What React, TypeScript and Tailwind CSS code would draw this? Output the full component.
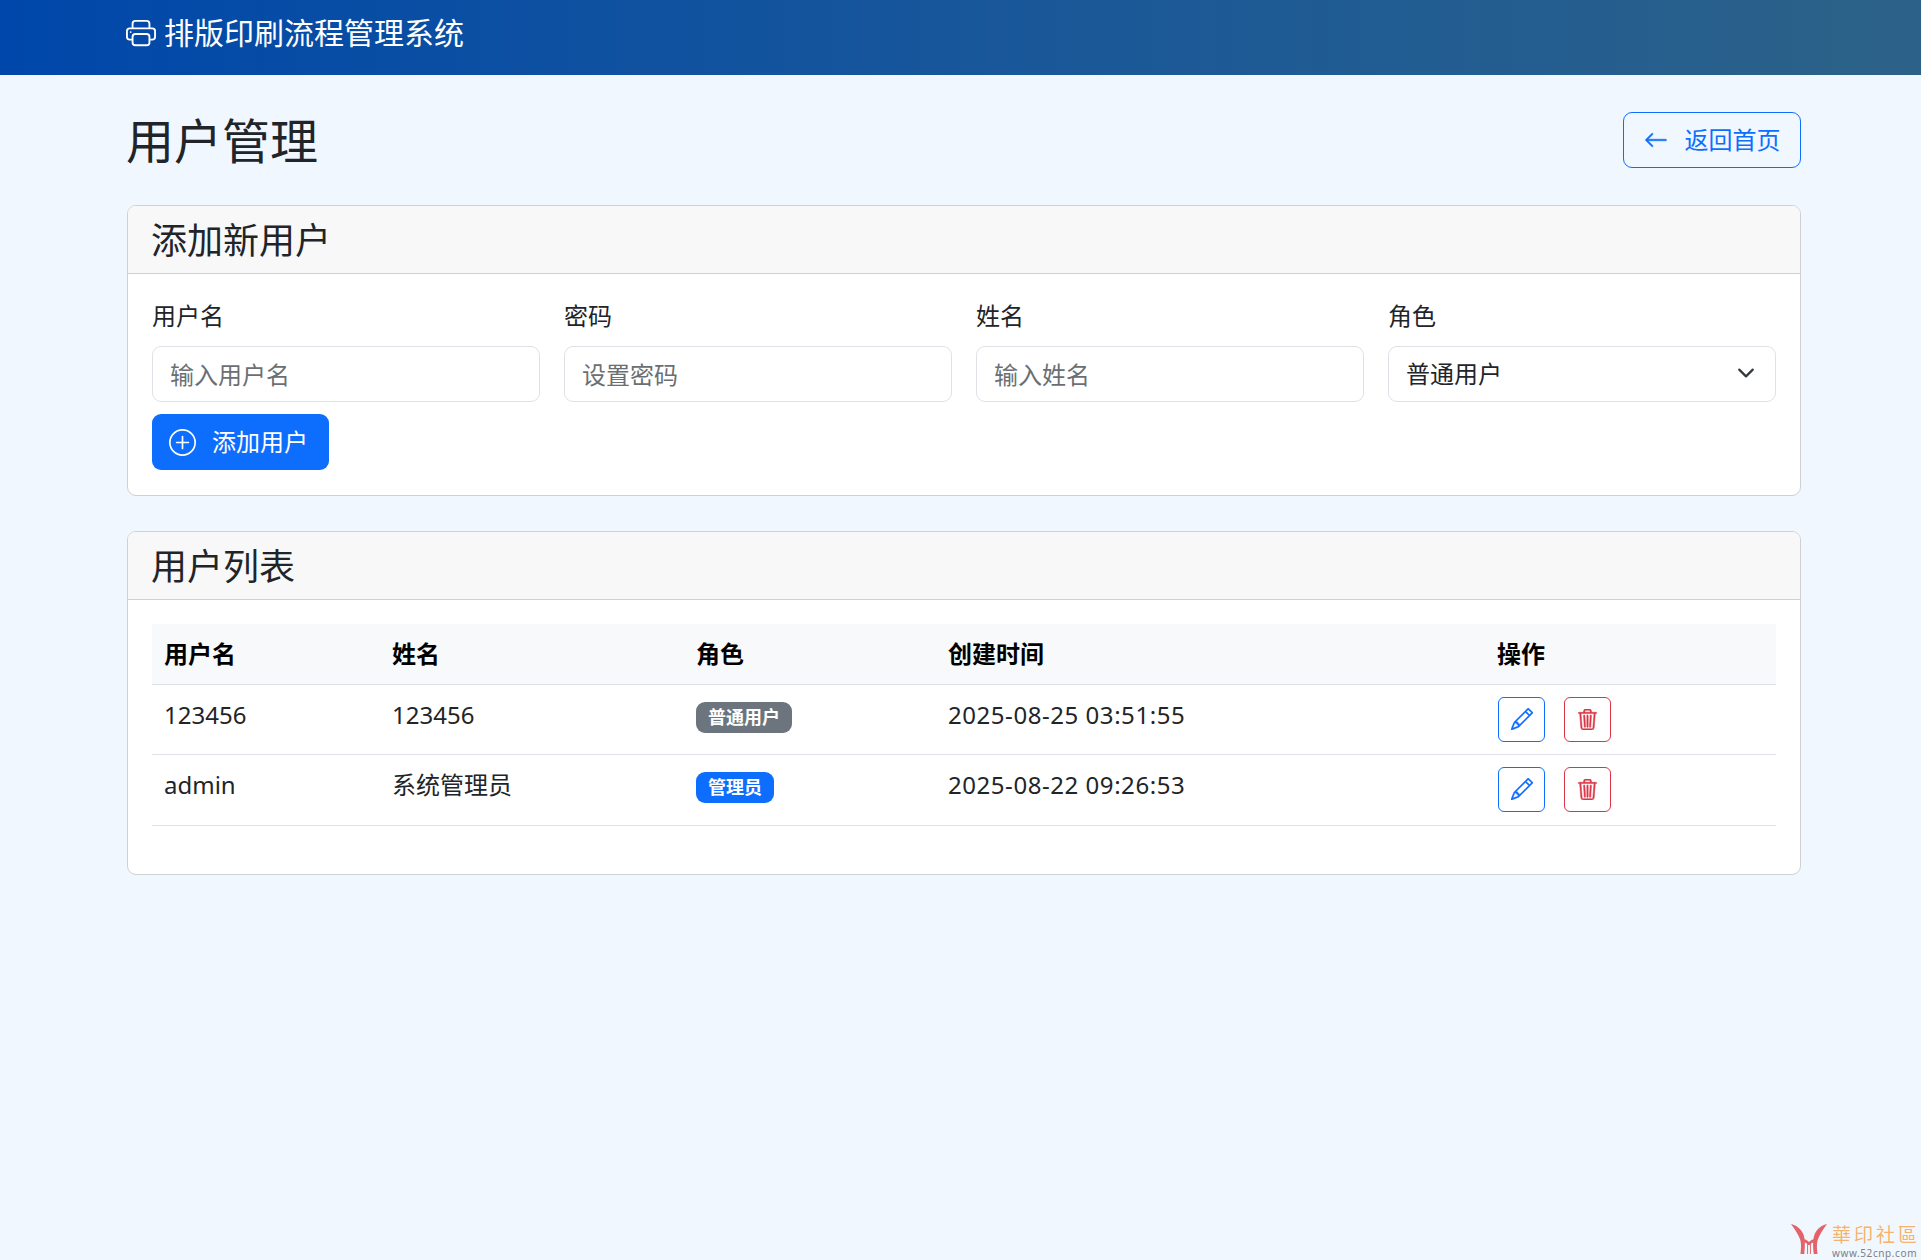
import { BsArrowLeft, BsPencil, BsPlusCircle, BsPrinter, BsTrash3 } from 'react-icons/bs'

const FONT = 'font-["Noto_Sans","Noto_Sans_CJK_SC",sans-serif]'

const FIELDS = [
  { label: '用户名', placeholder: '输入用户名', type: 'text' },
  { label: '密码', placeholder: '设置密码', type: 'password' },
  { label: '姓名', placeholder: '输入姓名', type: 'text' },
]

const USERS = [
  { username: '123456', name: '123456', role: '普通用户', admin: false, created: '2025-08-25 03:51:55' },
  { username: 'admin', name: '系统管理员', role: '管理员', admin: true, created: '2025-08-22 09:26:53' },
]

function Card({ title, children }: { title: string; children: React.ReactNode }) {
  return (
    <section className="rounded-[9px] border border-[#cfd0d2] bg-white overflow-hidden">
      <div className="h-[68px] border-b border-[#cfd0d2] bg-[#f8f8f8] pl-[23px] pr-6 pt-[2px] flex items-center">
        <h2 className="text-[36px] leading-[43px] text-[#212529]">{title}</h2>
      </div>
      {children}
    </section>
  )
}

function Watermark() {
  return (
    <div className="absolute right-[1px] bottom-0 h-[36px] flex items-start">
      <svg width="36" height="34" viewBox="0 0 38 34" preserveAspectRatio="none" className="-mt-[3px] mr-[5px]" aria-hidden="true">
        <path
          d="M0 3c5 1 10 4 13 10 2 5 2 11 1 20h-4c1-8 1-13-2-18C6 11 3 7 0 3Zm38 0c-5 1-10 4-13 10-2 5-2 11-1 20h4c-1-8-1-13 2-18 2-4 5-8 8-12Z"
          fill="#e2646a"
        />
        <path d="M12 18c3 0 5 1 7 3 2-2 4-3 7-3v3c-3 0-4 1-5 2v10h-1V24h-2v9h-1V23c-1-1-2-2-5-2Z" fill="#e2646a" />
      </svg>
      <div className="flex flex-col items-start">
        <span className='font-["Noto_Sans_CJK_TC",sans-serif] text-[19px] leading-[19px] tracking-[3px] text-[#f6b26b] [text-shadow:0_0_2px_#ffffff]'>
          華印社區
        </span>
        <span className="mt-[4px] text-[10px] leading-[13px] tracking-[0.6px] text-[#7b8088]">www.52cnp.com</span>
      </div>
    </div>
  )
}

export default function App() {
  return (
    <div className={`${FONT} relative min-h-[1260px] bg-[#f0f7ff] text-[24px] leading-[36px] text-[#212529]`}>
      <header className="h-[75px] bg-gradient-to-r from-[#0047ab] to-[#2c6288] pl-[126px] pb-[9px] flex items-center text-white">
        <BsPrinter className="text-[30px] mr-[8px]" />
        <span className="text-[30px] leading-[36px]">排版印刷流程管理系统</span>
      </header>

      <main className="ml-[127px] w-[1674px]">
        {/* Title row */}
        <div className="mt-[36px] mb-[37px] flex items-center justify-between h-[57px]">
          <h1 className="text-[48px] leading-[57px] text-[#212529] -ml-[1px] mt-[2px]">用户管理</h1>
          <a className="mt-[1px] h-[56px] w-[178px] rounded-[9px] border border-[#0d6efd] text-[#0d6efd] flex items-center justify-center gap-[17px]">
            <BsArrowLeft className="text-[24px]" strokeWidth={0.4} />
            返回首页
          </a>
        </div>

        <Card title="添加新用户">
          <div className="px-6 pt-[24px] pb-[25px]">
            <div className="grid grid-cols-4 gap-x-[24px]">
              {FIELDS.map((f) => (
                <label key={f.label} className="block">
                  <span className="block mb-[12px] h-[36px]">{f.label}</span>
                  <input
                    type={f.type}
                    placeholder={f.placeholder}
                    className="block w-full h-[56px] rounded-[9px] border border-[#dee2e6] bg-white px-[17px] placeholder:text-[#6b6f73] outline-none"
                  />
                </label>
              ))}
              <label className="block">
                <span className="block mb-[12px] h-[36px]">角色</span>
                <span className="relative block">
                  <select className="block w-full h-[56px] appearance-none rounded-[9px] border border-[#dee2e6] bg-white px-[17px] outline-none">
                    <option>普通用户</option>
                    <option>管理员</option>
                  </select>
                  <svg
                    className="absolute right-[21px] top-[18px] pointer-events-none"
                    width="18"
                    height="18"
                    viewBox="0 0 16 16"
                    fill="none"
                    stroke="#343a40"
                    strokeWidth="2"
                    strokeLinecap="round"
                    strokeLinejoin="round"
                  >
                    <path d="m2 5 6 6 6-6" />
                  </svg>
                </span>
              </label>
            </div>
            <button className="mt-[12px] h-[56px] w-[177px] rounded-[9px] bg-[#0d6efd] text-white flex items-center pl-[17px] gap-[16px]">
              <BsPlusCircle className="text-[27px]" />
              添加用户
            </button>
          </div>
        </Card>

        <div className="mt-[35px]">
          <Card title="用户列表">
            <div className="p-6 pb-[48px]">
              <table className="w-full table-fixed border-collapse">
                <colgroup>
                  <col className="w-[228px]" />
                  <col className="w-[304px]" />
                  <col className="w-[252px]" />
                  <col className="w-[549px]" />
                  <col />
                </colgroup>
                <thead>
                  <tr className="h-[60px] bg-[#f8f9fa] border-b border-[#dee2e6] text-black">
                    {['用户名', '姓名', '角色', '创建时间', '操作'].map((h) => (
                      <th key={h} className="px-3 text-left font-bold">
                        {h}
                      </th>
                    ))}
                  </tr>
                </thead>
                <tbody>
                  {USERS.map((u, i) => (
                    <tr key={u.username} className={`border-b border-[#dee2e6] ${i === 0 ? 'h-[70px]' : 'h-[71px]'}`}>
                      <td className="px-3 pt-[12px] align-top">{u.username}</td>
                      <td className="px-3 pt-[12px] align-top">{u.name}</td>
                      <td className="px-3 pt-[17px] align-top">
                        <span
                          className={`inline-block h-[31px] rounded-[9px] px-[12px] text-[18px] leading-[31px] font-bold text-white align-top ${
                            u.admin ? 'bg-[#0d6efd]' : 'bg-[#6c757d]'
                          }`}
                        >
                          {u.role}
                        </span>
                      </td>
                      <td className="px-3 pt-[12px] align-top tracking-[0.55px]">{u.created}</td>
                      <td className="pl-[13px] pr-3 align-top pt-[12px]">
                        <div className="flex gap-[19px]">
                          <button className="w-[47px] h-[45px] rounded-[6px] border border-[#0d6efd] text-[#0d6efd] flex items-center justify-center">
                            <BsPencil className="text-[22px]" strokeWidth={0.3} />
                          </button>
                          <button className="w-[47px] h-[45px] rounded-[6px] border border-[#dc3545] text-[#dc3545] flex items-center justify-center">
                            <BsTrash3 className="text-[21px]" strokeWidth={0.4} />
                          </button>
                        </div>
                      </td>
                    </tr>
                  ))}
                </tbody>
              </table>
            </div>
          </Card>
        </div>
      </main>

      <Watermark />
    </div>
  )
}
